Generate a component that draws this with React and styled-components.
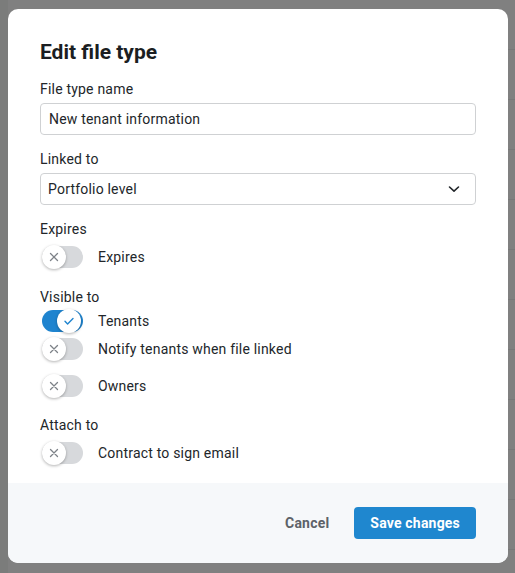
import React from "react";
import styled, { createGlobalStyle, css } from "styled-components";

const GlobalStyle = createGlobalStyle`
  html, body {
    margin: 0;
    padding: 0;
  }
  body {
    background: #808080;
    font-family: Roboto, "Noto Sans", "Liberation Sans", sans-serif;
    color: #1e2226;
    letter-spacing: 0.2px;
    -webkit-font-smoothing: antialiased;
  }
  * { box-sizing: border-box; }
`;

const Backdrop = styled.div`
  min-height: 573px;
  padding: 9px 7px 10px 8px;
  background-color: #808080;
  background-image:
    linear-gradient(90deg, #7b7c7b 0, #7b7c7b 8px, transparent 8px),
    repeating-linear-gradient(180deg, transparent 0, transparent 49px, #787878 49px, #787878 50px);
`;

const Modal = styled.div`
  width: 500px;
  background: #ffffff;
  border-radius: 10px;
  overflow: hidden;
  display: flex;
  flex-direction: column;
`;

const Body = styled.div`
  padding: 29px 32px 16px;
  display: flex;
  flex-direction: column;
`;

const Title = styled.h2`
  margin: 0 0 13px;
  font-size: 21px;
  line-height: 28px;
  font-weight: 700;
  letter-spacing: 0;
  color: #1b1e22;
`;

const Section = styled.div`
  display: flex;
  flex-direction: column;
  margin-bottom: ${(p) => p.$gap ?? 14}px;
  &:last-child { margin-bottom: 0; }
`;

const Label = styled.div`
  font-size: 14px;
  line-height: 20px;
  color: #22262a;
  margin-bottom: ${(p) => p.$mb ?? 4}px;
`;

const fieldBox = css`
  height: 32px;
  width: 100%;
  border: 1px solid #cfd1d3;
  border-radius: 4px;
  background: #fff;
  font-family: inherit;
  font-size: 14px;
  letter-spacing: 0.2px;
  color: #22262a;
`;

const TextInput = styled.input`
  ${fieldBox}
  padding: 0 8px;
  outline: none;
`;

const SelectBox = styled.div`
  ${fieldBox}
  display: flex;
  align-items: center;
  justify-content: space-between;
  padding: 0 15px 0 7px;
`;

const Row = styled.div`
  display: flex;
  align-items: center;
  height: 28px;
  margin-top: ${(p) => p.$mt ?? 4}px;
  font-size: 14px;
  color: #22262a;
`;

const Track = styled.span`
  position: relative;
  flex: none;
  width: 41px;
  height: 22px;
  margin-left: 2px;
  margin-right: 15px;
  border-radius: 11px;
  background: ${(p) => (p.$on ? "#1f84cf" : "#d7d9dc")};
`;

const Knob = styled.span`
  position: absolute;
  top: -1px;
  left: ${(p) => (p.$on ? "15px" : "0")};
  width: 24px;
  height: 24px;
  border-radius: 50%;
  background: #fff;
  box-shadow: 0 1px 3px rgba(0, 0, 0, 0.3);
  display: flex;
  align-items: center;
  justify-content: center;
`;

const Footer = styled.div`
  height: 80px;
  background: #f6f8fa;
  display: flex;
  align-items: center;
  justify-content: flex-end;
  gap: 9px;
  padding: 0 32px;
`;

const Button = styled.button`
  height: 32px;
  padding: 0 16px;
  border: none;
  border-radius: 4px;
  font-family: inherit;
  font-size: 14px;
  font-weight: 700;
  letter-spacing: 0.2px;
  cursor: pointer;
  ${(p) =>
    p.$primary
      ? css`
          background: #1f87cf;
          color: #fff;
        `
      : css`
          background: transparent;
          color: #5d6268;
        `}
`;

function Toggle({ on }) {
  return (
    <Track $on={on}>
      <Knob $on={on}>
        {on ? (
          <svg width="12" height="12" viewBox="0 0 12 12" fill="none">
            <path d="M2 6.3l2.6 2.6L10 3.4" stroke="#1f84cf" strokeWidth="1.4" strokeLinecap="round" strokeLinejoin="round" />
          </svg>
        ) : (
          <svg width="10" height="10" viewBox="0 0 10 10" fill="none">
            <path d="M1.5 1.5l7 7M8.5 1.5l-7 7" stroke="#7d8288" strokeWidth="1.3" strokeLinecap="round" />
          </svg>
        )}
      </Knob>
    </Track>
  );
}

function ToggleRow({ on, children, mt }) {
  return (
    <Row $mt={mt}>
      <Toggle on={on} />
      <span>{children}</span>
    </Row>
  );
}

export default function App() {
  return (
    <>
      <GlobalStyle />
      <Backdrop>
        <Modal>
          <Body>
            <Title>Edit file type</Title>

            <Section>
              <Label>File type name</Label>
              <TextInput defaultValue="New tenant information" />
            </Section>

            <Section>
              <Label>Linked to</Label>
              <SelectBox>
                <span>Portfolio level</span>
                <svg width="12" height="8" viewBox="0 0 12 8" fill="none">
                  <path d="M1.5 2l4.5 4.2L10.5 2" stroke="#22262a" strokeWidth="1.6" strokeLinecap="round" strokeLinejoin="round" />
                </svg>
              </SelectBox>
            </Section>

            <Section $gap={16}>
              <Label $mb={0}>Expires</Label>
              <ToggleRow>Expires</ToggleRow>
            </Section>

            <Section $gap={15}>
              <Label $mb={0}>Visible to</Label>
              <ToggleRow on mt={0}>Tenants</ToggleRow>
              <ToggleRow mt={0}>Notify tenants when file linked</ToggleRow>
              <ToggleRow mt={9}>Owners</ToggleRow>
            </Section>

            <Section>
              <Label $mb={0}>Attach to</Label>
              <ToggleRow>Contract to sign email</ToggleRow>
            </Section>
          </Body>

          <Footer>
            <Button>Cancel</Button>
            <Button $primary>Save changes</Button>
          </Footer>
        </Modal>
      </Backdrop>
    </>
  );
}
